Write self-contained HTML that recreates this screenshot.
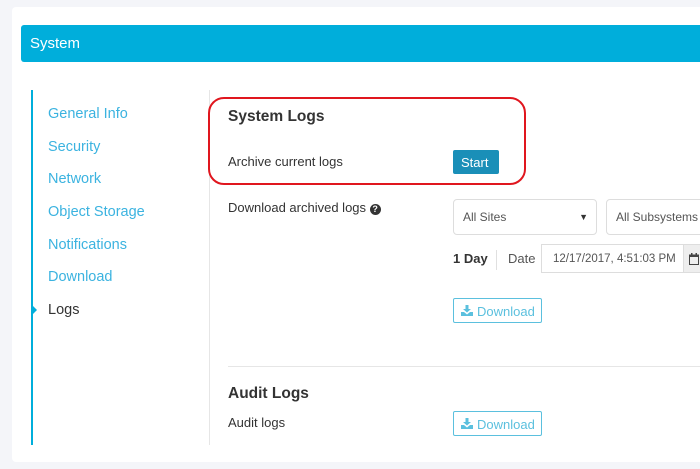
<!DOCTYPE html><html><head><style>
body{margin:0;width:700px;height:469px;background:#f4f5f9;font-family:"Liberation Sans",sans-serif;position:relative;overflow:hidden}
div,span,svg{position:absolute;box-sizing:border-box}
.card{left:12px;top:7px;width:700px;height:455px;background:#fff;border-radius:4px}
.hdr{left:21px;top:25px;width:690px;height:37px;background:#00aedb;border-radius:3px;color:#fff;font-size:15px;padding:10px 0 0 9px}
.nav{left:48px;font-size:14.5px;color:#3bb3e0}
.t{font-size:13px;color:#333}
.btn{border:1px solid #5bc0de;border-radius:2px;color:#5bc0de;font-size:13px;padding:5px 0 0 23px;width:89px;height:25px}
.btn svg{left:7px;top:6px}
</style></head><body>
<div class="card"></div>
<div class="hdr">System</div>
<div style="left:31px;top:90px;width:2px;height:355px;background:#00aedb"></div>
<div style="left:209px;top:90px;width:1px;height:355px;background:#e6e6e6"></div>
<div class="nav" style="top:106px">General Info</div>
<div class="nav" style="top:139px">Security</div>
<div class="nav" style="top:171px">Network</div>
<div class="nav" style="top:204px">Object Storage</div>
<div class="nav" style="top:237px">Notifications</div>
<div class="nav" style="top:269px">Download</div>
<div class="nav" style="top:302px;color:#333">Logs</div>
<div style="left:32px;top:305px;width:0;height:0;border-left:5px solid #00aedb;border-top:5px solid transparent;border-bottom:5px solid transparent"></div>
<div style="left:208px;top:97px;width:318px;height:88px;border:2px solid #e0161e;border-radius:16px"></div>
<div style="left:228px;top:108px;font-size:15.5px;font-weight:bold;color:#333">System Logs</div>
<div class="t" style="left:228px;top:154px">Archive current logs</div>
<div style="left:453px;top:150px;width:46px;height:24px;background:#1a8fb8;color:#fff;font-size:13px;padding:5px 0 0 8px;border-radius:2px">Start</div>
<div class="t" style="left:228px;top:200px">Download archived logs <span style="position:relative;display:inline-block;width:11px;height:11px;border-radius:50%;background:#333;color:#fff;font-size:9px;text-align:center;line-height:11px;font-weight:bold">?</span></div>
<div style="left:453px;top:199px;width:144px;height:36px;border:1px solid #ddd;border-radius:4px;font-size:12px;color:#555;padding:10px 0 0 9px">All Sites<span style="right:8px;top:12px;font-size:9px;color:#333">▼</span></div>
<div style="left:606px;top:199px;width:110px;height:36px;border:1px solid #ddd;border-radius:4px;font-size:12px;color:#555;padding:10px 0 0 9px">All Subsystems</div>
<div style="left:453px;top:251px;font-size:13px;font-weight:bold;color:#333">1 Day</div>
<div style="left:496px;top:250px;width:1px;height:20px;background:#e0e0e0"></div>
<div style="left:508px;top:251px;font-size:13px;color:#555">Date</div>
<div style="left:541px;top:244px;width:170px;height:29px;border:1px solid #ddd;font-size:11.5px;color:#555;padding:8px 0 0 11px">12/17/2017, 4:51:03 PM</div>
<div style="left:683px;top:244px;width:20px;height:29px;background:#eee;border:1px solid #ddd"><svg style="left:5px;top:8px" width="10" height="12" viewBox="0 0 10 12"><rect x="0.5" y="2" width="9" height="9.5" fill="none" stroke="#444"/><rect x="0" y="2" width="10" height="2" fill="#444"/><rect x="2" y="0" width="1.5" height="3" fill="#444"/><rect x="6.5" y="0" width="1.5" height="3" fill="#444"/></svg></div>
<div class="btn" style="left:453px;top:298px"><svg width="12" height="11" viewBox="0 0 12 11"><path d="M4.5 0h3v4h2.5L6 7.5 2 4h2.5z M0 7h3l3 2.5 3-2.5h3v4H0z" fill="#5bc0de"/></svg>Download</div>
<div style="left:228px;top:366px;width:480px;height:1px;background:#e6e6e6"></div>
<div style="left:228px;top:385px;font-size:15.5px;font-weight:bold;color:#333">Audit Logs</div>
<div class="t" style="left:228px;top:415px">Audit logs</div>
<div class="btn" style="left:453px;top:411px"><svg width="12" height="11" viewBox="0 0 12 11"><path d="M4.5 0h3v4h2.5L6 7.5 2 4h2.5z M0 7h3l3 2.5 3-2.5h3v4H0z" fill="#5bc0de"/></svg>Download</div>
</body></html>
